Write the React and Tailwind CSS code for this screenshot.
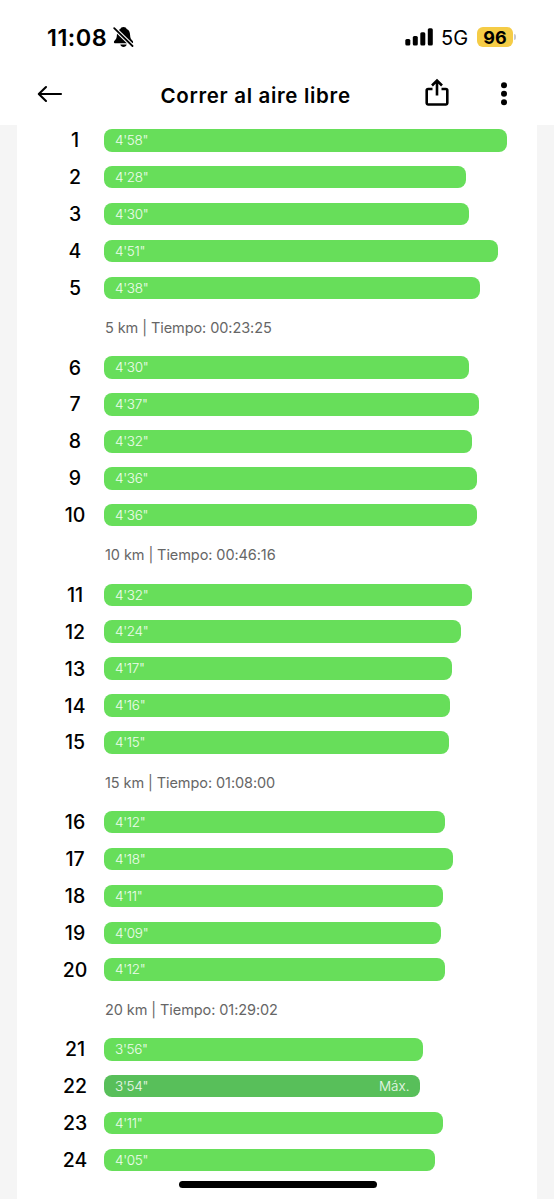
const PX_PER_SECOND = 403 / 298;

const groups = [
  { laps: ["4'58\"", "4'28\"", "4'30\"", "4'51\"", "4'38\""], total: "5 km | Tiempo: 00:23:25" },
  { laps: ["4'30\"", "4'37\"", "4'32\"", "4'36\"", "4'36\""], total: "10 km | Tiempo: 00:46:16" },
  { laps: ["4'32\"", "4'24\"", "4'17\"", "4'16\"", "4'15\""], total: "15 km | Tiempo: 01:08:00" },
  { laps: ["4'12\"", "4'18\"", "4'11\"", "4'09\"", "4'12\""], total: "20 km | Tiempo: 01:29:02" },
  { laps: ["3'56\"", "3'54\"", "4'11\"", "4'05\""] },
];

const FASTEST = "3'54\"";

function barWidth(pace) {
  const [minutes, seconds] = pace.replace('"', "").split("'").map(Number);
  return (minutes * 60 + seconds) * PX_PER_SECOND;
}

function BellOff() {
  return (
    <svg className="ml-[6px] h-[22px] w-[22px]" viewBox="0 0 22 22" fill="none">
      <path d="M10.500 1c-1.700 0-2.800.8-3.200 2C4.600 4.200 4 6.500 3.900 9c-.1 3-.9 4.200-2.200 5.500-.6.6-.8 1-.8 1.500 0 .8.500 1.300 1.500 1.300h16.200c1 0 1.500-.5 1.500-1.300 0-.5-.2-.9-.8-1.500-1.300-1.300-2.100-2.500-2.200-5.500-.1-2.500-.7-4.800-3.400-6-.4-1.200-1.500-2-3.200-2Z" fill="#000" />
      <path d="M7.300 18.600h6.400c-.3 1.400-1.600 2.300-3.200 2.300s-2.900-.9-3.200-2.300Z" fill="#000" />
      <path d="M0 1 20.500 21" stroke="#fff" strokeWidth="4" />
      <path d="M1.200 2.200 19.500 20" stroke="#000" strokeWidth="1.800" strokeLinecap="round" />
    </svg>
  );
}

function StatusBar() {
  return (
    <div className="flex h-[74px] items-center pl-[47px] pr-[38px]">
      <span className="w-[60px] whitespace-nowrap pt-px text-[23.500px] font-semibold leading-none tracking-[0.500px]">11:08</span>
      <BellOff />
      <div className="ml-auto flex items-center">
        <svg className="h-[18px] w-[28px]" viewBox="0 0 28 18">
          <rect x="0.300" y="11" width="5" height="6.500" rx="1.500" />
          <rect x="7.800" y="8" width="5" height="9.500" rx="1.500" />
          <rect x="15.300" y="4.300" width="5" height="13.200" rx="1.500" />
          <rect x="22.800" y="0.300" width="5" height="17.200" rx="1.500" />
        </svg>
        <span className="ml-[8px] w-[28px] whitespace-nowrap pt-px text-[20px] leading-none">5G</span>
        <span className="ml-[8px] flex h-[20px] w-[36px] items-center justify-center rounded-[6px] bg-[#f5cc46] pt-px text-[18px] font-bold leading-none">96</span>
        <span className="ml-[1px] h-[6px] w-[2px] rounded-r-full bg-[#c9c9cc]" />
      </div>
    </div>
  );
}

function TitleBar() {
  return (
    <div className="flex h-[51px] items-start pl-[37px] pr-[45px]">
      <svg className="mt-[10px] h-[20px] w-[26px]" viewBox="0 0 26 20" fill="none" stroke="#000" strokeWidth="2.100" strokeLinecap="round" strokeLinejoin="round">
        <path d="M24 10H2M9 3 1.800 10 9 17" />
      </svg>
      <h1 className="ml-[97.500px] mt-[9.500px] w-[191.500px] whitespace-nowrap text-[20.500px] font-semibold leading-[24px] tracking-[0.670px]">Correr al aire libre</h1>
      <svg className="ml-auto mt-[4px] h-[29px] w-[26px]" viewBox="0 0 26 29" fill="none" stroke="#000" strokeWidth="2.600">
        <path d="M8.500 11H4.200a1.500 1.500 0 0 0-1.500 1.500v12.500a1.500 1.500 0 0 0 1.500 1.500h17.600a1.500 1.500 0 0 0 1.500-1.500V12.500a1.500 1.500 0 0 0-1.500-1.500h-4.300" />
        <path d="M13 17.500V3M8 7.500l5-5 5 5" />
      </svg>
      <svg className="ml-[49px] mt-[7px] h-[26px] w-[10px]" viewBox="0 0 10 26">
        <circle cx="5" cy="4.300" r="3" />
        <circle cx="5" cy="12.800" r="3" />
        <circle cx="5" cy="21.300" r="3" />
      </svg>
    </div>
  );
}

function Lap({ number, pace }) {
  const fastest = pace === FASTEST;
  return (
    <li className="flex h-[22.500px] items-center">
      <span className="w-[44px] pt-[1.500px] text-center text-[19.500px] font-medium leading-none">{number}</span>
      <div
        className={
          "ml-[7px] flex h-full items-center justify-between rounded-[8px] px-[11px] pt-px text-[13.500px] font-light leading-none tracking-[-0.300px] text-white/90 " +
          (fastest ? "bg-[#58bf5a]" : "bg-[#67de5a]")
        }
        style={{ width: barWidth(pace) }}
      >
        <span>{pace}</span>
        {fastest && <span className="tracking-normal">Máx.</span>}
      </div>
    </li>
  );
}

export default function App() {
  return (
    <div className="relative flex h-[1199px] w-[554px] flex-col overflow-hidden bg-[#f5f5f5] font-['Inter',sans-serif] text-black">
      <header className="shrink-0 bg-white">
        <StatusBar />
        <TitleBar />
      </header>
      <main className="mx-[17px] min-h-0 flex-1 bg-white pl-[36px] pt-[4px]">
        {groups.map((group, g) => (
          <section key={g} className="h-[227.270px]">
            <ol className="flex flex-col gap-[14.430px]">
              {group.laps.map((pace, i) => (
                <Lap key={i} number={g * 5 + i + 1} pace={pace} />
              ))}
            </ol>
            {group.total && (
              <p className="ml-[52px] mt-[18px] text-[14.500px] leading-[22px] tracking-[-0.080px] text-[#666]">{group.total}</p>
            )}
          </section>
        ))}
      </main>
      <div className="absolute bottom-[11.500px] left-[178.500px] h-[7px] w-[198px] rounded-full bg-black" />
    </div>
  );
}
